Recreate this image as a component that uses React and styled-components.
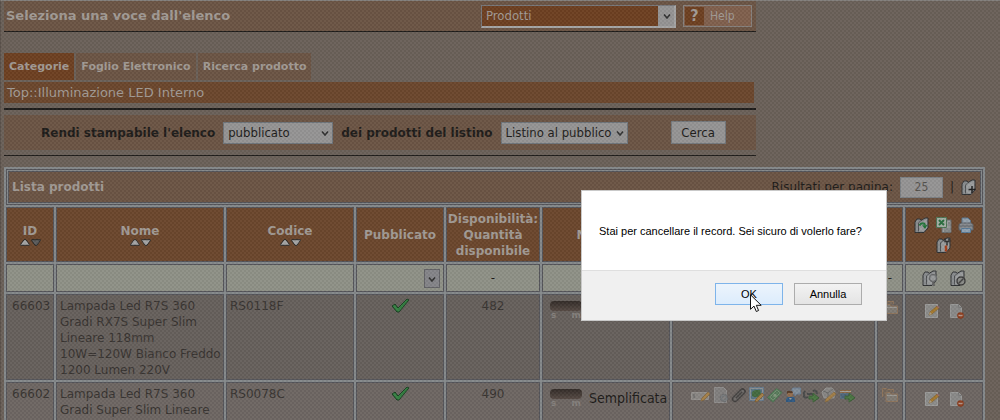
import React from 'react';

import styled, { createGlobalStyle } from 'styled-components';

const SANS = '"DejaVu Sans", Verdana, sans-serif';
const CONDENSED = '"DejaVu Sans Condensed", "DejaVu Sans", Tahoma, sans-serif';
const DIALOG_FONT = '"Liberation Sans", Arial, sans-serif';

const COLORS = {
  page: '#6b6159',
  bar: '#6c5545',
  orange: '#6c472d',
  orangeDark: '#6e4022',
  text: '#a19a94',
  ink: '#1f1d1b',
  cellInk: '#393532',
  grid: '#85898b',
  gridDark: '#55555a',
  field: '#959494',
  filter: '#8f9187',
};

const GlobalStyle = createGlobalStyle`
  * {
    box-sizing: border-box;
  }

  body {
    background-color: ${COLORS.page};
    color: ${COLORS.ink};
    font-family: ${SANS};
    font-size: 12px;
    margin: 0;
    overflow: hidden;
  }
`;

const Page = styled.div`
  border-left: 1px solid #5b524b;
  border-top: 1px solid #837f7c;
  height: 100vh;
  overflow: hidden;
  padding: 0 15px 0 3px;
`;

const Texture = styled.div`
  background-image: conic-gradient(
    rgba(0, 0, 0, 0.04) 25%,
    rgba(255, 255, 255, 0.03) 0 50%,
    rgba(0, 0, 0, 0.04) 0 75%,
    rgba(255, 255, 255, 0.03) 0
  );
  background-size: 4px 4px;
  inset: 0;
  pointer-events: none;
  position: fixed;
`;

const TopArea = styled.div`
  max-width: 752px;
`;

const HeaderBar = styled.header`
  align-items: center;
  background-color: ${COLORS.bar};
  border-bottom: 1px solid ${COLORS.ink};
  display: flex;
  height: 31px;
  justify-content: space-between;
  padding: 0 4px 0 2px;
`;

const PageTitle = styled.h1`
  color: ${COLORS.text};
  font-size: 13px;
  line-height: 16px;
  margin: 0;
`;

const HeaderTools = styled.div`
  align-items: center;
  display: flex;
  gap: 7px;
`;

const SelectWrapper = styled.span`
  display: inline-flex;
  position: relative;
  width: ${(props) => props.$width}px;

  svg {
    pointer-events: none;
    position: absolute;
    right: ${(props) => (props.$boxed ? 5 : 4)}px;
    top: 8px;
  }
`;

const Select = styled.select`
  appearance: none;
  background-color: ${COLORS.field};
  border: 1px solid #6f757b;
  border-radius: 0;
  color: ${COLORS.ink};
  font-family: ${CONDENSED};
  font-size: 13px;
  height: 22px;
  line-height: 16px;
  padding: 0 4px;
  width: 100%;
`;

const SectionSelect = styled(Select)`
  background-image: linear-gradient(${COLORS.field}, ${COLORS.field});
  background-position: right;
  background-repeat: no-repeat;
  background-size: 16px 100%;
  background-color: ${COLORS.orangeDark};
  border-color: #77777a #a5a5a5 #a5a5a5 #77777a;
  border-width: 1px 2px 2px 1px;
  color: ${COLORS.text};
  height: 23px;
`;

const HelpButton = styled.button`
  align-items: stretch;
  background-color: #80604e;
  border: 1px solid #86817d;
  color: ${COLORS.text};
  display: flex;
  font-family: ${CONDENSED};
  font-size: 12px;
  height: 22px;
  line-height: 18px;
  padding: 1px;
  width: 69px;
`;

const HelpMark = styled.span`
  background-color: ${COLORS.orangeDark};
  font-size: 16px;
  font-weight: bold;
  margin-right: 6px;
  width: 19px;
`;

const Tabs = styled.nav`
  display: flex;
  gap: 2px;
  padding-top: 21px;
`;

const Tab = styled.a`
  background-color: ${(props) => (props.$active ? COLORS.orangeDark : COLORS.bar)};
  color: ${COLORS.text};
  font-size: 11px;
  font-weight: bold;
  line-height: 27px;
  padding: 0 5px;
  text-decoration: none;
  white-space: nowrap;
`;

const Crumbs = styled.div`
  background-color: ${COLORS.orange};
  color: ${COLORS.text};
  font-size: 13px;
  line-height: 21px;
  margin: 2px 2px 5px 0;
  padding-left: 3px;
`;

const FilterArea = styled.form`
  border-bottom: 1px solid ${COLORS.ink};
  border-top: 2px solid ${COLORS.ink};
  padding: 5px 0;
`;

const FilterBar = styled.div`
  align-items: center;
  background-color: ${COLORS.bar};
  display: flex;
  gap: 8px;
  height: 35px;
  padding-left: 37px;
`;

const FilterLabel = styled.label`
  font-size: 12px;
  font-weight: bold;
  white-space: nowrap;
`;

const SearchButton = styled.button`
  background-color: ${COLORS.field};
  border: 1px solid #74787c;
  color: ${COLORS.ink};
  font-family: ${CONDENSED};
  font-size: 13px;
  height: 23px;
  line-height: 16px;
  margin-left: 35px;
  padding: 0;
  width: 55px;
`;

const Table = styled.table`
  background-color: ${COLORS.grid};
  border-spacing: 2px;
  margin-top: 11px;
  table-layout: fixed;
  width: 100%;
`;

const TitleCell = styled.td`
  background-color: ${COLORS.bar};
  border: 1px solid ${COLORS.gridDark};
  box-shadow: inset 0 0 0 1px ${COLORS.grid}, inset 0 0 0 2px ${COLORS.gridDark};
  height: 36px;
  padding: 0 5px;
`;

const TitleContent = styled.div`
  align-items: center;
  color: ${COLORS.ink};
  display: flex;
  font-size: 12px;
  gap: 7px;
`;

const ListTitle = styled.h2`
  color: ${COLORS.text};
  flex: 1;
  font-size: 12px;
  margin: 0;
`;

const PageSize = styled.input`
  background-color: ${COLORS.field};
  border: 1px solid #7b7f84;
  color: #55534f;
  font-family: ${CONDENSED};
  font-size: 12px;
  height: 21px;
  padding: 0;
  text-align: center;
  width: 43px;
`;

const HeadCell = styled.th`
  background-color: ${COLORS.orange};
  border: 1px solid ${COLORS.gridDark};
  color: ${COLORS.text};
  font-size: 12px;
  height: 55px;
  line-height: 16px;
  padding: 0;
`;

const SortArrows = styled.div`
  display: flex;
  gap: 1px;
  justify-content: center;
`;

const SortButton = styled.button`
  background: none;
  border: 0;
  display: flex;
  padding: 0;
`;

const HeadIcons = styled.div`
  display: flex;
  flex-wrap: wrap;
  gap: 4px 6px;
  justify-content: center;
`;

const FilterCell = styled.td`
  background-color: ${COLORS.filter};
  border: 1px solid ${COLORS.gridDark};
  height: 28px;
  padding: 0 3px;
  text-align: center;
`;

const FilterInput = styled.input`
  background: none;
  border: 0;
  display: block;
  font-family: ${SANS};
  font-size: 12px;
  height: 22px;
  padding: 0;
  width: 100%;
`;

const CellSelect = styled(Select)`
  background-color: #858589;
  border-color: #626266;
  height: 19px;
`;

const CellSelectWrapper = styled(SelectWrapper)`
  display: flex;
  margin-left: auto;

  svg {
    right: 4px;
    top: 7px;
  }
`;

const Cell = styled.td`
  background-color: ${(props) => (props.$odd ? '#6e6763' : '#67605c')};
  border: 1px solid ${COLORS.gridDark};
  color: ${COLORS.cellInk};
  font-size: 12px;
  height: 86px;
  line-height: 16px;
  padding: 3px ${(props) => (props.$wide ? 5 : 3)}px 1px;
  text-align: ${(props) => (props.$center ? 'center' : 'left')};
  vertical-align: top;
  white-space: nowrap;
`;

const IconRow = styled.div`
  display: flex;
  gap: ${(props) => props.$gap}px;
  justify-content: center;
  padding-top: ${(props) => props.$top || 0}px;
`;

const IconButton = styled.button`
  background: none;
  border: 0;
  display: flex;
  padding: 0;
`;

const ModeRow = styled.label`
  align-items: flex-start;
  color: ${COLORS.ink};
  display: flex;
  font-family: ${CONDENSED};
  font-size: 14px;
  gap: 7px;
  padding: 3px 4px;
`;

const ModeSwitch = styled.span`
  display: block;
  width: 32px;
`;

const ModeInput = styled.input`
  appearance: none;
  background: linear-gradient(#332c28, #574b45);
  border-radius: 4px;
  display: block;
  height: 10px;
  margin: 0;
  width: 32px;
`;

const ModeLetters = styled.span`
  color: #85807d;
  display: flex;
  font-family: ${SANS};
  font-size: 9px;
  font-weight: bold;
  justify-content: space-between;
  line-height: 9px;
  padding: 0 1px;
`;

const ModeName = styled.span`
  padding-top: 1px;
`;

const Dialog = styled.div`
  background-color: #ffffff;
  border: 1px solid #c9c9c9;
  color: #000000;
  font-family: ${DIALOG_FONT};
  font-size: 11px;
  position: fixed;
  right: 113px;
  top: 190px;
  width: 306px;
`;

const DialogMessage = styled.p`
  line-height: 16px;
  margin: 0;
  padding: 32px 17px 31px;
  white-space: nowrap;
`;

const DialogFooter = styled.div`
  background-color: #f0f0f0;
  border-top: 1px solid #dfdfdf;
  display: flex;
  gap: 11px;
  height: 50px;
  justify-content: flex-end;
  padding: 12px 24px 15px 0;
`;

const DialogButton = styled.button`
  background: ${(props) => (props.$primary
    ? 'linear-gradient(#ecf4fc, #dcecfc)'
    : 'linear-gradient(#f2f2f2, #e4e4e4)')};
  border: 1px solid ${(props) => (props.$primary ? '#7eb4ea' : '#acacac')};
  color: #000000;
  font-family: ${DIALOG_FONT};
  font-size: 11px;
  height: 22px;
  padding: 0;
  width: 68px;
`;

const Pointer = styled.svg`
  left: 168px;
  position: absolute;
  top: 103px;
`;

const Chevron = () => (
  <svg width="8" height="7" viewBox="0 0 8 7" fill="none" stroke="#333" strokeWidth="1.600">
    <path d="M1 1.5 4 5 7 1.5" />
  </svg>
);

const SortIcon = ({ down, dim }) => (
  <svg width="10" height="7" viewBox="0 0 10 7">
    <path
        d={down ? 'M.7 .7h8.6v1L6 6.3H4L.7 1.7z' : 'M.7 6.3h8.6v-1L6 .7H4L.7 5.3z'}
        fill={dim ? '#5c5c5c' : '#a5a5a5'}
        stroke="#2c2a28" />
  </svg>
);

const FolderShape = () => (
  <>
    <path d="M1 5 3 2h3l1 1.500 4-2.500h3v10l-4 4.500H1z" fill="#8b8e90" stroke="#303234" strokeLinejoin="round" />
    <path d="M5.500 6 13 2v8.500L9.500 14H5.500z" fill="#9b9d9e" />
    <path d="M4.500 14.500V6l2.500-2.500" fill="none" stroke="#505254" />
  </>
);

const ICONS = {
  folderAdd: (
    <>
      <FolderShape />
      <path d="M11 7v7M7.500 10.500h7" stroke="#1f1f1f" strokeWidth="1.500" />
    </>
  ),
  folderReload: (
    <>
      <FolderShape />
      <path d="M5.500 8.500c1.500-3 5-3 5.500 0" fill="none" stroke="#23753a" strokeWidth="2" />
      <path d="m8 8.500 5.500-.5-2.500 4z" fill="#23753a" />
    </>
  ),
  excel: (
    <>
      <path d="M6 3h9v12.500H6z" fill="#999c9c" stroke="#686b6c" />
      <path d="M12 6h2M12 8h2M8 12h6M8 14h6" stroke="#727777" />
      <path d="M.5 .5h10v10H.5z" fill="#a3aea4" stroke="#4c7454" />
      <path d="m3 3 5 5M8 3 3 8" stroke="#2c7041" strokeWidth="2" />
    </>
  ),
  printer: (
    <>
      <path d="M4 7V1h6l2.500 2.500V7z" fill="#93a0ab" stroke="#5a7690" />
      <path d="M1 7.500 3 6h10l2 1.500V13H1z" fill="#898c90" stroke="#5d6268" />
      <path d="M1 9h14" stroke="#5f646b" />
      <path d="M3.500 11.500h9v4h-9z" fill="#8fa2b2" stroke="#587a97" />
    </>
  ),
  folderTools: (
    <>
      <FolderShape />
      <path d="M9 1.500v3h2v4M13 1.500v3h-2" stroke="#303030" strokeWidth="1.500" fill="none" />
      <path d="M10 8.500v6" stroke="#a8401c" strokeWidth="2.500" />
    </>
  ),
  folderSearch: (
    <>
      <FolderShape />
      <circle cx="11" cy="8" r="3.500" fill="#97999a" stroke="#696b6c" strokeWidth="1.500" />
      <path d="m11 12 1 4" stroke="#626262" strokeWidth="2" />
    </>
  ),
  folderBlock: (
    <>
      <FolderShape />
      <circle cx="11" cy="11" r="4" fill="#8b8c89" stroke="#3d3d3d" strokeWidth="1.500" />
      <path d="m8.500 13.500 5-5" stroke="#3d3d3d" strokeWidth="1.500" />
    </>
  ),
  edit: (
    <>
      <path d="M1.500 1.500h12v13h-12z" fill="#8c8c8a" stroke="#9b9b9a" />
      <path d="m5 12 1-3 7-6 2 2-7 6z" fill="#a87c30" stroke="#7d5d2a" strokeWidth=".7" />
      <path d="m5 12 1-3 2 2z" fill="#b4a489" />
      <path d="m12.500 3.500 1-1 2 2-1 1z" fill="#9a6a62" />
    </>
  ),
  remove: (
    <>
      <path d="M2.500 1.500h8l3 3v10h-11z" fill="#8a8a89" stroke="#989897" />
      <path d="M10.500 1.500v3h3" fill="none" stroke="#777" />
      <circle cx="12.500" cy="12.500" r="3.300" fill="#8c3d1e" />
      <path d="M10.500 12.500h4" stroke="#b59a8e" strokeWidth="1.500" />
    </>
  ),
  folders: (
    <>
      <path d="M.5 10V1.500h4l1 1h6V5" fill="#75685b" stroke="#8f755c" />
      <path d="M4 14.500V5.500h4l1 1.500h6.500v7.500z" fill="#807b74" stroke="#8f755c" />
      <path d="M5 8.500h10" stroke="#9b9893" />
    </>
  ),
  field: (
    <>
      <path d="M.5 5.500h17v7H.5z" fill="#8a8784" stroke="#94918e" />
      <path d="M3 7v4" stroke="#626262" />
      <path d="m10 14 1-3 6-6 2 2-6 6z" fill="#a58049" stroke="#84683f" strokeWidth=".7" />
    </>
  ),
  pageGear: (
    <>
      <path d="M1.500 .5h9l3 3v12h-12z" fill="#827f7e" stroke="#908e8d" />
      <circle cx="11" cy="11" r="3" fill="none" stroke="#686a6c" strokeWidth="2.500" strokeDasharray="2 1" />
      <circle cx="11" cy="11" r="2.500" fill="none" stroke="#777a7c" strokeWidth="1.500" />
    </>
  ),
  clip: (
    <>
      <path d="m4 12 7.500-7.500" stroke="#444140" strokeWidth="6.500" strokeLinecap="round" />
      <path d="m4 12 7.500-7.500" stroke="#6c6967" strokeWidth="3.500" strokeLinecap="round" />
      <path d="m5 11 6-6" stroke="#403e3d" strokeWidth="1.500" />
    </>
  ),
  image: (
    <>
      <path d="M.5 .5h14v13H.5z" fill="#8d9092" stroke="#65798c" />
      <path d="M2 2h11v10H2z" fill="#5a7684" />
      <path d="M3 9V5l3-2h5l1 4-2 3H5z" fill="#456b41" />
      <path d="m6 15 1-3 6-6 2 2-6 6z" fill="#a58049" stroke="#805c2c" strokeWidth=".7" />
    </>
  ),
  money: (
    <>
      <path d="m.5 10.500 9-9 5.500 4-9 9.500z" fill="#577a5a" stroke="#4b7350" />
      <path d="m3 10 7-7 3 3-7 7z" fill="none" stroke="#748f73" />
      <circle cx="8" cy="8.500" r="1.800" fill="#7d9379" />
    </>
  ),
  user: (
    <>
      <path d="M8 1h7.500v6H12l-2 2V7H7V2z" fill="#828e9a" stroke="#6a7d90" />
      <path d="M1 15v-3l2-2h6l1 2v3z" fill="#315a83" />
      <circle cx="5" cy="7" r="3" fill="#916d4f" />
      <path d="M2 7V4h5l1 2H3" fill="#573d2b" />
      <path d="m4 11 1 2 2-2z" fill="#9b9994" />
    </>
  ),
  link: (
    <>
      <path d="M2 4c-3 5 0 8 3 6M10 4c2-1 4 0 4 3M4 7h7" fill="none" stroke="#484a4a" strokeWidth="2" />
      <path d="M6 9h4V6l6 5-6 4v-3H6z" fill="#4c7744" stroke="#3d6038" />
    </>
  ),
  tagEdit: (
    <>
      <path d="m1 5 4-4h6l3 4-1 6H3z" fill="#888684" stroke="#949391" />
      <path d="m2 4 5 2 5-4M7 6v5" fill="none" stroke="#6a6a68" />
      <path d="m4 15 1-3 8-7 2 2-8 7z" fill="#a58049" stroke="#84683f" strokeWidth=".7" />
    </>
  ),
  cards: (
    <>
      <path d="M.5 2.500h12v7H.5z" fill="#8b6846" stroke="#6c675f" />
      <path d="M1 4.500h11" stroke="#a2a09b" />
      <path d="M1.500 6.500h10v5h-10z" fill="#4e6579" stroke="#596e7e" />
      <path d="M6 9h4V6l6 5-6 4v-3H6z" fill="#4c7744" stroke="#3d6038" />
    </>
  ),
  check: (
    <path d="m1 8 3-2 3 4 9-9 2 1L8 14H6z" fill="#368043" stroke="#193c20" strokeLinejoin="round" />
  ),
};

const Icon = ({ name, width = 16 }) => (
  <svg width={width} height="16" viewBox={`0 0 ${width} 16`} fill="none">
    {ICONS[name]}
  </svg>
);

const ToolButton = ({ name, label, width }) => (
  <IconButton type="button" aria-label={label}>
    <Icon name={name} width={width} />
  </IconButton>
);

const COLUMN_WIDTHS = [48, 168, 128, 88, 94, 128, null, 26, 78];

const ROW_TOOLS = [
  { name: 'field', label: 'Modifica campi', width: 20 },
  { name: 'pageGear', label: 'Opzioni' },
  { name: 'clip', label: 'Allegati' },
  { name: 'image', label: 'Immagini' },
  { name: 'money', label: 'Prezzi' },
  { name: 'user', label: 'Commenti' },
  { name: 'link', label: 'Collegamenti' },
  { name: 'tagEdit', label: 'Attributi' },
  { name: 'cards', label: 'Pagamenti' },
];

const PRODUCTS = [
  {
    id: '66603',
    name: ['Lampada Led R7S 360', 'Gradi RX7S Super Slim', 'Lineare 118mm', '10W=120W Bianco Freddo', '1200 Lumen 220V'],
    code: 'RS0118F',
    quantity: 482,
  },
  {
    id: '66602',
    name: ['Lampada Led R7S 360', 'Gradi Super Slim Lineare'],
    code: 'RS0078C',
    quantity: 490,
  },
];

const SortableHead = ({ title, sorted }) => (
  <HeadCell scope="col">
    {title}
    <SortArrows>
      <SortButton type="button" aria-label={`${title} crescente`}><SortIcon /></SortButton>
      <SortButton type="button" aria-label={`${title} decrescente`}><SortIcon down dim={sorted} /></SortButton>
    </SortArrows>
  </HeadCell>
);

const ProductRow = ({ product, odd }) => (
  <tr>
    <Cell $odd={odd} $wide>{product.id}</Cell>
    <Cell $odd={odd}>
      {product.name.map((line) => <div key={line}>{line}</div>)}
    </Cell>
    <Cell $odd={odd}>{product.code}</Cell>
    <Cell $odd={odd} $center>
      <IconRow $gap={0}><Icon name="check" width={19} /></IconRow>
    </Cell>
    <Cell $odd={odd} $center>{product.quantity}</Cell>
    <Cell $odd={odd}>
      <ModeRow>
        <ModeSwitch>
          <ModeInput type="checkbox" />
          <ModeLetters>
            <span>s</span>
            <span>m</span>
          </ModeLetters>
        </ModeSwitch>
        <ModeName>Semplificata</ModeName>
      </ModeRow>
    </Cell>
    <Cell $odd={odd}>
      <IconRow $gap={2} $top={1}>
        {ROW_TOOLS.map((tool) => <ToolButton key={tool.name} {...tool} />)}
      </IconRow>
    </Cell>
    <Cell $odd={odd}>
      <IconRow $gap={0} $top={1}><ToolButton name="folders" label="Duplica" /></IconRow>
    </Cell>
    <Cell $odd={odd}>
      <IconRow $gap={8} $top={5}>
        <ToolButton name="edit" label="Modifica" />
        <ToolButton name="remove" label="Cancella" />
      </IconRow>
    </Cell>
  </tr>
);

const ProductTable = () => (
  <Table>
    <colgroup>
      {COLUMN_WIDTHS.map((width, index) => <col key={index} width={width || undefined} />)}
    </colgroup>
    <tbody>
      <tr>
        <TitleCell colSpan={9}>
          <TitleContent>
            <ListTitle>Lista prodotti</ListTitle>
            <label htmlFor="page-size">Risultati per pagina:</label>
            <PageSize id="page-size" defaultValue="25" />
            <span>|</span>
            <ToolButton name="folderAdd" label="Nuovo" />
          </TitleContent>
        </TitleCell>
      </tr>
      <tr>
        <SortableHead title="ID" sorted />
        <SortableHead title="Nome" />
        <SortableHead title="Codice" />
        <HeadCell scope="col">Pubblicato</HeadCell>
        <HeadCell scope="col">Disponibilità: Quantità disponibile</HeadCell>
        <HeadCell scope="col">Modalità</HeadCell>
        <HeadCell />
        <HeadCell />
        <HeadCell>
          <HeadIcons>
            <ToolButton name="folderReload" label="Aggiorna" />
            <ToolButton name="excel" label="Esporta in Excel" />
            <ToolButton name="printer" label="Stampa" />
            <ToolButton name="folderTools" label="Strumenti" />
          </HeadIcons>
        </HeadCell>
      </tr>
      <tr>
        <FilterCell><FilterInput aria-label="Filtra ID" /></FilterCell>
        <FilterCell><FilterInput aria-label="Filtra nome" /></FilterCell>
        <FilterCell><FilterInput aria-label="Filtra codice" /></FilterCell>
        <FilterCell>
          <CellSelectWrapper $width={16}>
            <CellSelect aria-label="Filtra pubblicato"><option aria-label="tutti" /></CellSelect>
            <Chevron />
          </CellSelectWrapper>
        </FilterCell>
        <FilterCell>-</FilterCell>
        <FilterCell />
        <FilterCell />
        <FilterCell>-</FilterCell>
        <FilterCell>
          <IconRow $gap={12}>
            <ToolButton name="folderSearch" label="Cerca" />
            <ToolButton name="folderBlock" label="Annulla filtro" />
          </IconRow>
        </FilterCell>
      </tr>
      {PRODUCTS.map((product, index) => (
        <ProductRow key={product.id} product={product} odd={index % 2 === 1} />
      ))}
    </tbody>
  </Table>
);

const ConfirmDialog = () => (
  <Dialog role="alertdialog" aria-describedby="confirm-message">
    <DialogMessage id="confirm-message">
      Stai per cancellare il record. Sei sicuro di volerlo fare?
    </DialogMessage>
    <DialogFooter>
      <DialogButton type="button" $primary>OK</DialogButton>
      <DialogButton type="button">Annulla</DialogButton>
    </DialogFooter>
    <Pointer width="12" height="19" viewBox="0 0 12 19">
      <path d="M.5 .8v14.500l3.500-3.200 2.300 5.400 2.300-1-2.300-5.200h4.900z" fill="#fff" stroke="#111" />
    </Pointer>
  </Dialog>
);

const App = () => (
  <>
    <GlobalStyle />
    <Page>
      <TopArea>
        <HeaderBar>
          <PageTitle>Seleziona una voce dall&apos;elenco</PageTitle>
          <HeaderTools>
            <SelectWrapper $width={195} $boxed>
              <SectionSelect aria-label="Sezione"><option>Prodotti</option></SectionSelect>
              <Chevron />
            </SelectWrapper>
            <HelpButton type="button">
              <HelpMark>?</HelpMark>
              Help
            </HelpButton>
          </HeaderTools>
        </HeaderBar>
        <Tabs>
          <Tab href="#categorie" $active>Categorie</Tab>
          <Tab href="#foglio">Foglio Elettronico</Tab>
          <Tab href="#ricerca">Ricerca prodotto</Tab>
        </Tabs>
        <Crumbs>Top::Illuminazione LED Interno</Crumbs>
        <FilterArea>
          <FilterBar>
            <FilterLabel htmlFor="status">Rendi stampabile l&apos;elenco</FilterLabel>
            <SelectWrapper $width={110}>
              <Select id="status"><option>pubblicato</option></Select>
              <Chevron />
            </SelectWrapper>
            <FilterLabel htmlFor="price-list">dei prodotti del listino</FilterLabel>
            <SelectWrapper $width={127}>
              <Select id="price-list"><option>Listino al pubblico</option></Select>
              <Chevron />
            </SelectWrapper>
            <SearchButton type="button">Cerca</SearchButton>
          </FilterBar>
        </FilterArea>
      </TopArea>
      <ProductTable />
    </Page>
    <Texture />
    <ConfirmDialog />
  </>
);

export default App;
